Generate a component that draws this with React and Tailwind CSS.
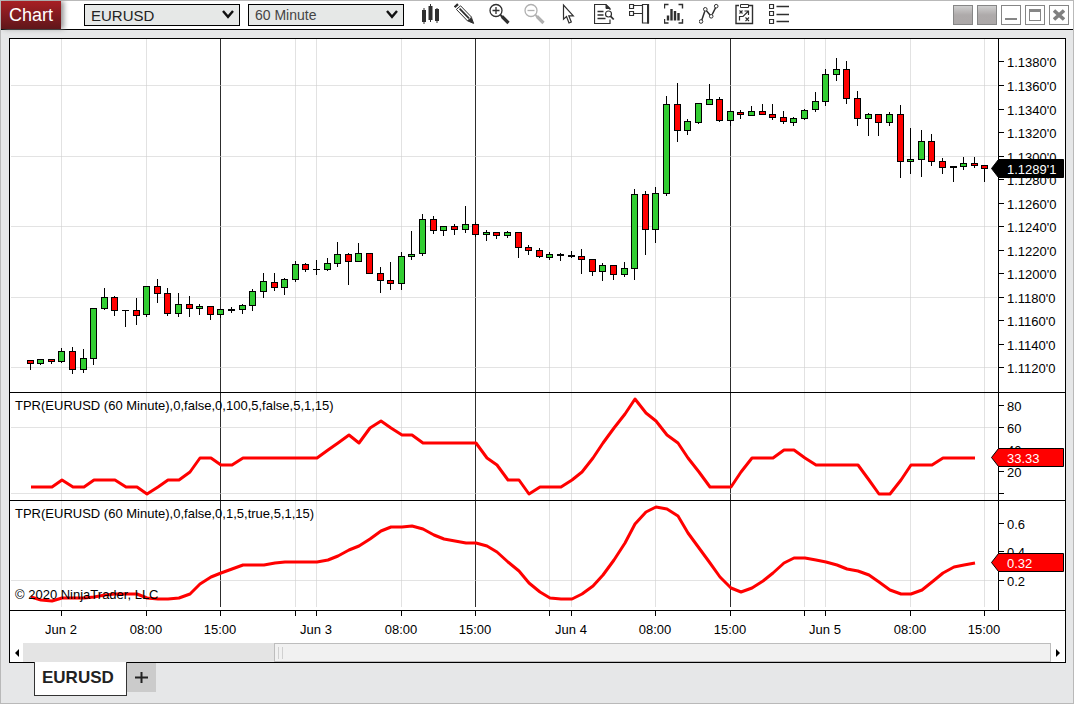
import { useState } from 'react';

const PLOT_LEFT = 10;
const PLOT_WIDTH = 988;

// share of the history that is on screen
const VISIBLE_SHARE = 0.756;

// x of the bar at the given index
const barX = (i) => Math.round(29.5 + 10.61 * i);

// kind (g = up, r = down, d = doji), high, body top, body bottom, low
const candles = [
  ['r', 360, 360, 363, 369], ['g', 359, 359, 363, 364], ['r', 359, 359, 361, 363], ['g', 348, 351, 361, 362],
  ['r', 347, 351, 369, 373], ['g', 349, 358, 369, 372], ['g', 308, 308, 358, 364], ['g', 288, 297, 308, 309],
  ['r', 296, 297, 310, 315], ['d', 310, 310, 310, 326], ['r', 298, 310, 315, 324], ['g', 286, 286, 314, 316],
  ['r', 279, 286, 293, 302], ['r', 288, 293, 313, 315], ['g', 293, 304, 313, 316], ['r', 296, 304, 308, 316],
  ['g', 304, 306, 308, 314], ['r', 306, 306, 314, 319], ['g', 309, 309, 314, 317], ['d', 307, 309, 310, 312],
  ['g', 304, 305, 309, 313], ['g', 289, 291, 305, 310], ['g', 273, 281, 291, 297], ['r', 273, 282, 287, 290],
  ['g', 278, 279, 287, 294], ['g', 261, 264, 279, 281], ['r', 263, 264, 269, 271], ['d', 260, 269, 269, 274],
  ['g', 258, 263, 269, 270], ['g', 242, 254, 263, 266], ['r', 253, 254, 261, 284], ['g', 243, 253, 261, 261],
  ['r', 253, 253, 273, 273], ['r', 267, 273, 280, 292], ['r', 262, 280, 283, 289], ['g', 252, 256, 283, 289],
  ['g', 231, 254, 256, 259], ['g', 214, 219, 253, 255], ['r', 216, 219, 230, 233], ['g', 226, 226, 230, 235],
  ['r', 224, 226, 229, 234], ['g', 206, 224, 229, 232], ['r', 222, 224, 234, 236], ['g', 230, 232, 234, 240],
  ['r', 232, 232, 235, 238], ['g', 231, 232, 235, 237], ['r', 232, 232, 247, 257], ['r', 245, 247, 250, 254],
  ['r', 248, 250, 256, 257], ['g', 252, 254, 257, 259], ['d', 253, 254, 255, 260], ['d', 251, 255, 256, 257],
  ['r', 249, 256, 259, 273], ['r', 259, 259, 271, 275], ['g', 263, 265, 271, 280], ['r', 265, 265, 274, 279],
  ['g', 262, 268, 274, 276], ['g', 189, 194, 268, 279], ['r', 191, 194, 229, 254], ['g', 187, 193, 229, 242],
  ['g', 96, 104, 193, 195], ['r', 83, 104, 130, 141], ['g', 119, 121, 130, 134], ['g', 103, 103, 122, 123],
  ['g', 84, 99, 104, 104], ['r', 97, 99, 120, 121], ['g', 111, 111, 120, 125], ['r', 110, 112, 114, 118],
  ['g', 106, 111, 115, 115], ['r', 104, 111, 114, 114], ['r', 104, 114, 117, 119], ['r', 111, 117, 121, 123],
  ['g', 117, 118, 122, 125], ['g', 109, 110, 118, 119], ['g', 92, 101, 109, 111], ['g', 69, 74, 101, 105],
  ['g', 58, 69, 74, 80], ['r', 61, 69, 98, 103], ['r', 91, 98, 118, 125], ['g', 113, 114, 118, 135],
  ['r', 114, 114, 122, 135], ['g', 112, 114, 122, 125], ['r', 105, 114, 161, 177], ['g', 128, 159, 161, 173],
  ['g', 130, 141, 159, 176], ['r', 134, 141, 161, 165], ['r', 158, 161, 167, 173], ['d', 166, 166, 167, 181],
  ['g', 157, 163, 166, 169], ['r', 157, 163, 165, 167], ['r', 165, 165, 168, 181],
];

const tprRaw = [
  487, 487, 487, 480, 487, 487, 480, 480, 480, 487, 487, 494, 487, 480, 480, 472, 458, 458, 465, 465,
  458, 458, 458, 458, 458, 458, 458, 458, 450, 443, 435, 443, 428, 421, 428, 435, 435, 443, 443, 443,
  443, 443, 443, 458, 465, 480, 480, 494, 487, 487, 487, 480, 472, 458, 443, 428, 414, 399, 413, 421,
  435, 443, 458, 472, 487, 487, 487, 472, 458, 458, 458, 450, 450, 458, 465, 465, 465, 465, 465, 480,
  494, 494, 480, 465, 465, 465, 458, 458, 458, 458,
];

const tprSmooth = [
  597, 600, 601, 598, 598, 598, 597, 595, 594, 594, 594, 598, 599, 599, 598, 594, 584, 577, 573, 569,
  565, 565, 565, 563, 562, 562, 562, 562, 560, 556, 550, 546, 539, 531, 527, 527, 526, 529, 535, 539,
  541, 543, 543, 546, 552, 562, 571, 583, 592, 598, 599, 599, 594, 586, 575, 560, 543, 524, 512, 507,
  509, 516, 533, 548, 563, 577, 588, 592, 588, 581, 573, 563, 558, 558, 560, 562, 565, 569, 571, 575,
  582, 590, 594, 594, 590, 582, 573, 567, 565, 563,
];

const timeTicks = [
  { x: 61, label: 'Jun 2' },
  { x: 146, label: '08:00' },
  { x: 220, label: '15:00', session: true },
  { x: 295 },
  { x: 316, label: 'Jun 3' },
  { x: 401, label: '08:00' },
  { x: 475, label: '15:00', session: true },
  { x: 549 },
  { x: 571, label: 'Jun 4' },
  { x: 655, label: '08:00' },
  { x: 730, label: '15:00', session: true },
  { x: 804 },
  { x: 825, label: 'Jun 5' },
  { x: 910, label: '08:00' },
  { x: 984, label: '15:00' },
];

const priceTicks = [
  [61, "1.1380'0"], [85, "1.1360'0"], [109, "1.1340'0"], [132, "1.1320'0"], [156, "1.1300'0"],
  [179, "1.1280'0"], [203, "1.1260'0"], [226, "1.1240'0"], [250, "1.1220'0"], [273, "1.1200'0"],
  [297, "1.1180'0"], [320, "1.1160'0"], [344, "1.1140'0"], [367, "1.1120'0"],
];

function Grid({ top, bottom, rows }) {
  return (
    <g shapeRendering="crispEdges">
      {timeTicks.map((t) => (
        <rect key={t.x} x={t.x} y={top} width="1" height={bottom - top} fill={t.session ? '#2d2d2d' : '#e2e2e2'} />
      ))}
      {rows.map((y) => (
        <rect key={y} x="11" y={y} width="986" height="1" fill="#d0d0d0" fillOpacity="0.6" />
      ))}
    </g>
  );
}

function Candles() {
  return (
    <g shapeRendering="crispEdges">
      {candles.map(([kind, high, top, bottom, low], i) => {
        const x = barX(i);
        return (
          <g key={i}>
            <rect x={x} y={high} width="1" height={low - high + 1} fill="#000" />
            <rect x={x - 3} y={top} width="7" height={bottom - top + 1} fill="#000" />
            {kind !== 'd' && (
              <rect
                x={x - 2}
                y={top + 1}
                width="5"
                height={Math.max(bottom - top - 1, 0)}
                fill={kind === 'g' ? '#32cd32' : '#ff0000'}
              />
            )}
          </g>
        );
      })}
    </g>
  );
}

function Line({ values }) {
  const points = values.map((y, i) => `${barX(i) + 1},${y}`).join(' ');
  return <polyline points={points} fill="none" stroke="#ff0000" strokeWidth="3" strokeLinejoin="round" />;
}

function Panel({ top, height, gridBottom, rows, ticks, marker, caption, note, className, children }) {
  return (
    <section className={`flex ${className}`}>
      <div className="relative min-w-0 flex-1">
        <svg
          className="block w-full"
          height={height}
          viewBox={`${PLOT_LEFT} ${top} ${PLOT_WIDTH} ${height}`}
          preserveAspectRatio="none"
          aria-hidden="true"
        >
          <Grid top={top} bottom={gridBottom} rows={rows} />
          {children}
        </svg>
        {caption && <p className="absolute top-[5px] left-[5px] whitespace-nowrap leading-4">{caption}</p>}
        {note && <p className="absolute bottom-[7px] left-[5px] whitespace-nowrap leading-4">{note}</p>}
      </div>
      <svg className="relative block w-[67px] shrink-0 overflow-visible" height={height} viewBox={`998 ${top} 67 ${height}`}>
        <rect x="998" y={top} width="1" height={height} fill="#000" />
        {ticks.map(([y, label]) => (
          <g key={y}>
            <rect x="999" y={y} width="5" height="1" fill="#000" />
            <text x="1007" y={y + 6}>{label}</text>
          </g>
        ))}
        <path
          d={`M991.5 ${marker.y + 0.5} L998.5 ${marker.y - 8.5} H1063.5 V${marker.y + 9.5} H998.5 Z`}
          fill={marker.color}
          stroke="#000"
        />
        <text x="1007" y={marker.y + 6} fill="#fff">{marker.label}</text>
      </svg>
    </section>
  );
}

function TimeAxis() {
  return (
    <div className="mr-[67px]">
      <svg className="block w-full overflow-visible" height="32">
        {timeTicks.map((t) => {
          const left = `${((t.x - PLOT_LEFT) / PLOT_WIDTH) * 100}%`;
          return (
            <g key={t.x}>
              <rect x={left} y="0" width="1" height="5" fill="#000" shapeRendering="crispEdges" />
              {t.label && <text x={left} y="23" textAnchor="middle">{t.label}</text>}
            </g>
          );
        })}
      </svg>
    </div>
  );
}

function Magnifier({ children }) {
  return (
    <>
      <circle cx="7" cy="7.5" r="6" strokeWidth="1.3" />
      {children}
      <path d="M11.5 12 L13.5 14" strokeWidth="2" />
      <path d="M13 13.5 L19.5 20" strokeWidth="3.2" />
    </>
  );
}

const tools = [
  {
    name: 'Bar type',
    icon: (
      <g fill="currentColor" stroke="none">
        <path d="M3 7h4v12H3zM4.5 5h1v16h-1zM9.5 3h4v14h-4zM11 1h1v18h-1zM16 6h4v12h-4zM17.5 5h1v15h-1z" />
      </g>
    ),
  },
  {
    name: 'Drawing tools',
    icon: (
      <>
        <path d="M0.6 4.2 L4 1.2" strokeWidth="2.4" />
        <path d="M2.4 6.4 L13.6 18 M6.6 2.8 L17.6 14.2 M2.4 6.4 L6.6 2.8" strokeWidth="1" />
        <path d="M5.6 5.6 L15 15.4" strokeWidth="1.8" />
        <path d="M13.6 17.8 L17.4 14.4 L19.6 20.4 Z" fill="currentColor" />
      </>
    ),
  },
  {
    name: 'Zoom in',
    icon: (
      <Magnifier>
        <path d="M3.5 7.5h7M7 4v7" strokeWidth="1.3" />
      </Magnifier>
    ),
  },
  {
    name: 'Zoom out',
    disabled: true,
    icon: (
      <Magnifier>
        <path d="M3.5 7.5h7" strokeWidth="1.3" />
      </Magnifier>
    ),
  },
  {
    name: 'Cursor',
    icon: <path d="M4.5 2 V16.2 L7.5 13.6 L10 20 L12.3 19 L9.8 12.8 H14.3 Z" strokeWidth="1.2" />,
  },
  {
    name: 'Data box',
    icon: (
      <>
        <path d="M16 16.5 V20.5 H0.5 V1.5 H12 L16 5.5 V7" strokeWidth="1.2" />
        <path d="M12 1.5 V5.5 H16" fill="currentColor" />
        <path d="M3.5 8.5h6M3.5 12h6M3.5 15.5h8" strokeWidth="1.4" />
        <circle cx="14.5" cy="11" r="3" strokeWidth="1.2" />
        <path d="M16.7 13.3 L19.7 16.5" strokeWidth="1.8" />
      </>
    ),
  },
  {
    name: 'Chart trader',
    icon: (
      <>
        <path d="M0.5 1.5h4v4h-4zM0.5 8.5h4v4h-4z" strokeWidth="1.2" />
        <path d="M4.5 2.5h9M4.5 10.5h9" strokeWidth="1.2" />
        <path d="M13.5 1.5h6v18.5h-6z" strokeWidth="1.2" />
        <path d="M19 1v19.5" strokeWidth="2" />
      </>
    ),
  },
  {
    name: 'Indicators',
    icon: (
      <>
        <path d="M4.5 1.5h-4v4M14.5 1.5h4v4M4.5 20h-4v-4M14.5 20h4v-4" strokeWidth="1.4" />
        <path d="M4 17.5v-5M7.5 17.5V6M11 17.5V8M14.5 17.5V10" strokeWidth="2.4" />
      </>
    ),
  },
  {
    name: 'Strategies',
    icon: (
      <>
        <path d="M2.8 17 L5.8 8.2 M7.5 7.8 L11 12 M13.2 11.5 L16.5 4.8" strokeWidth="1.5" />
        <circle cx="2" cy="18.5" r="1.8" />
        <circle cx="6.3" cy="6.3" r="1.8" />
        <circle cx="12.2" cy="13.3" r="1.8" />
        <circle cx="17.2" cy="3.2" r="1.8" />
      </>
    ),
  },
  {
    name: 'Strategy performance',
    icon: (
      <>
        <path d="M5 2.5H2V20.5H18.5V2.5H15" strokeWidth="1.4" />
        <path d="M6.5 1.5h8v3h-8z" />
        <path d="M5.5 7.5l3 3M8.5 7.5l-3 3M11.5 14.5l3.5 3.5M15 14.5l-3.5 3.5" strokeWidth="1.1" />
        <path d="M5.5 17.5V13.5H9L14 8.5M10.5 8h4v4" strokeWidth="1.2" />
      </>
    ),
  },
  {
    name: 'Properties',
    icon: (
      <>
        <path d="M0.5 1.5h4v4h-4zM0.5 8.5h4v4h-4zM0.5 16.5h4v4h-4z" strokeWidth="1.2" />
        <path d="M7.5 3.5H20M7.5 11.5H20M7.5 18.5H20" strokeWidth="1.4" />
      </>
    ),
  },
];

function ToolbarSelect({ label, value, options, onChange, className }) {
  return (
    <div className="relative w-[156px]">
      <select
        aria-label={label}
        value={value}
        onChange={(e) => onChange(e.target.value)}
        className={`block h-[22px] w-full appearance-none border border-black bg-[#e6e8e7] pl-[6px] ${className}`}
      >
        {options.map((o) => (
          <option key={o}>{o}</option>
        ))}
      </select>
      <svg
        className="pointer-events-none absolute top-[6px] right-[6px]"
        width="12"
        height="9"
        viewBox="0 0 12 9"
        fill="none"
        stroke="#111"
        strokeWidth="2.4"
      >
        <path d="M1 1 L6 6.8 L11 1" />
      </svg>
    </div>
  );
}

function WindowButton({ label, filled, children }) {
  return (
    <button
      type="button"
      aria-label={label}
      className={`flex size-5 items-center justify-center border border-[#868686] ${
        filled ? 'bg-linear-to-b from-[#cfcfcf] via-[#aeaaaa] to-[#aca8a8]' : 'bg-white'
      }`}
    >
      {children}
    </button>
  );
}

function Toolbar() {
  const [instrument, setInstrument] = useState('EURUSD');
  const [interval, setBarInterval] = useState('60 Minute');

  return (
    <header className="flex h-[29px] items-stretch border-b border-black bg-white">
      <h1 className="flex w-[60px] items-center justify-center bg-linear-to-b from-[#a81f24] to-[#5f161a] text-lg leading-6 text-white shadow-[3px_0_5px_#999]">
        Chart
      </h1>
      <div className="ml-[23px] flex gap-2 pt-[3px]">
        <ToolbarSelect
          label="Instrument"
          value={instrument}
          options={['EURUSD', 'GBPUSD', 'USDJPY']}
          onChange={setInstrument}
          className="text-[15px] text-[#222]"
        />
        <ToolbarSelect
          label="Interval"
          value={interval}
          options={['1 Minute', '15 Minute', '60 Minute']}
          onChange={setBarInterval}
          className="text-sm text-[#444]"
        />
      </div>
      <nav className="ml-2 flex" aria-label="Chart tools">
        {tools.map((tool) => (
          <button
            key={tool.name}
            type="button"
            aria-label={tool.name}
            disabled={tool.disabled}
            className="flex w-[35px] items-start justify-center pt-[2px] text-[#2f2f2f] disabled:text-[#b0b0b0]"
          >
            <svg width="21" height="22" viewBox="0 0 21 22" fill="none" stroke="currentColor">
              {tool.icon}
            </svg>
          </button>
        ))}
      </nav>
      <div className="mr-1 ml-auto flex gap-1 pt-1">
        <WindowButton label="Instrument link" filled />
        <WindowButton label="Interval link" filled />
        <WindowButton label="Minimize">
          <span className="mt-2 h-[2px] w-3 bg-[#868686]" />
        </WindowButton>
        <WindowButton label="Maximize">
          <span className="h-3 w-3 border border-t-[3px] border-[#868686]" />
        </WindowButton>
        <WindowButton label="Close">
          <svg width="12" height="12" viewBox="0 0 12 12" stroke="#808080" strokeWidth="3.6">
            <path d="M1 1.5 L11 10.5 M11 1.5 L1 10.5" />
          </svg>
        </WindowButton>
      </div>
    </header>
  );
}

function ScrollBar() {
  return (
    <div className="flex h-[19px] bg-[#e4e4e4]">
      <button type="button" aria-label="Scroll left" className="flex w-[13px] items-center justify-center bg-white">
        <svg width="4" height="8" viewBox="0 0 4 8">
          <path d="M4 0 L0 4 L4 8 Z" />
        </svg>
      </button>
      <div className="flex flex-1 justify-end">
        <div
          className="flex items-center gap-[3px] border border-[#bdbdbd] bg-[#f1f1f1] pl-[3px]"
          style={{ width: `${VISIBLE_SHARE * 100}%` }}
        >
          <span className="h-3 w-px bg-[#d0d0d0]" />
          <span className="h-3 w-px bg-[#d0d0d0]" />
        </div>
      </div>
      <button type="button" aria-label="Scroll right" className="flex w-[14px] items-center justify-center bg-white">
        <svg width="4" height="8" viewBox="0 0 4 8">
          <path d="M0 0 L4 4 L0 8 Z" />
        </svg>
      </button>
    </div>
  );
}

export default function App() {
  return (
    <div className="flex min-h-screen flex-col border border-[#b9b9b9] bg-[#e6e7e8] font-['Liberation_Sans',Arial,sans-serif] text-black">
      <Toolbar />
      <main className="pt-2 pr-[7px] pl-2">
        <div className="border border-black bg-white text-[13px]">
          <Panel
            top={39}
            height={353}
            gridBottom={392}
            rows={[85, 156, 226, 297, 367]}
            ticks={priceTicks}
            marker={{ y: 168, label: "1.1289'1", color: '#000' }}
            className="border-b border-black"
          >
            <Candles />
          </Panel>
          <Panel
            top={393}
            height={107}
            gridBottom={500}
            rows={[427, 493]}
            ticks={[[405, '80'], [427, '60'], [449, '40'], [471, '20'], [493, '']]}
            marker={{ y: 457, label: '33.33', color: '#ff0000' }}
            caption="TPR(EURUSD (60 Minute),0,false,0,100,5,false,5,1,15)"
            className="border-b border-black"
          >
            <Line values={tprRaw} />
          </Panel>
          <Panel
            top={501}
            height={109}
            gridBottom={607}
            rows={[580]}
            ticks={[[523, '0.6'], [551, '0.4'], [580, '0.2']]}
            marker={{ y: 562, label: '0.32', color: '#ff0000' }}
            caption="TPR(EURUSD (60 Minute),0,false,0,1,5,true,5,1,15)"
            note="© 2020 NinjaTrader, LLC"
            className="border-b border-black"
          >
            <Line values={tprSmooth} />
          </Panel>
          <TimeAxis />
          <ScrollBar />
        </div>
        <div className="-mt-px ml-[25px] flex items-start" role="tablist">
          <button
            type="button"
            role="tab"
            aria-selected="true"
            className="relative h-[34px] w-[93px] border border-t-0 border-[#333] bg-white pb-[2px] pl-[7px] text-left text-[17px] font-bold text-[#222]"
          >
            EURUSD
          </button>
          <button type="button" aria-label="Add tab" className="mt-px flex h-[29px] w-[29px] items-center justify-center bg-[#cbcbcb]">
            <svg width="13" height="13" viewBox="0 0 13 13" stroke="#222" strokeWidth="2">
              <path d="M0 6.5h13M6.5 1v11" />
            </svg>
          </button>
        </div>
      </main>
    </div>
  );
}
